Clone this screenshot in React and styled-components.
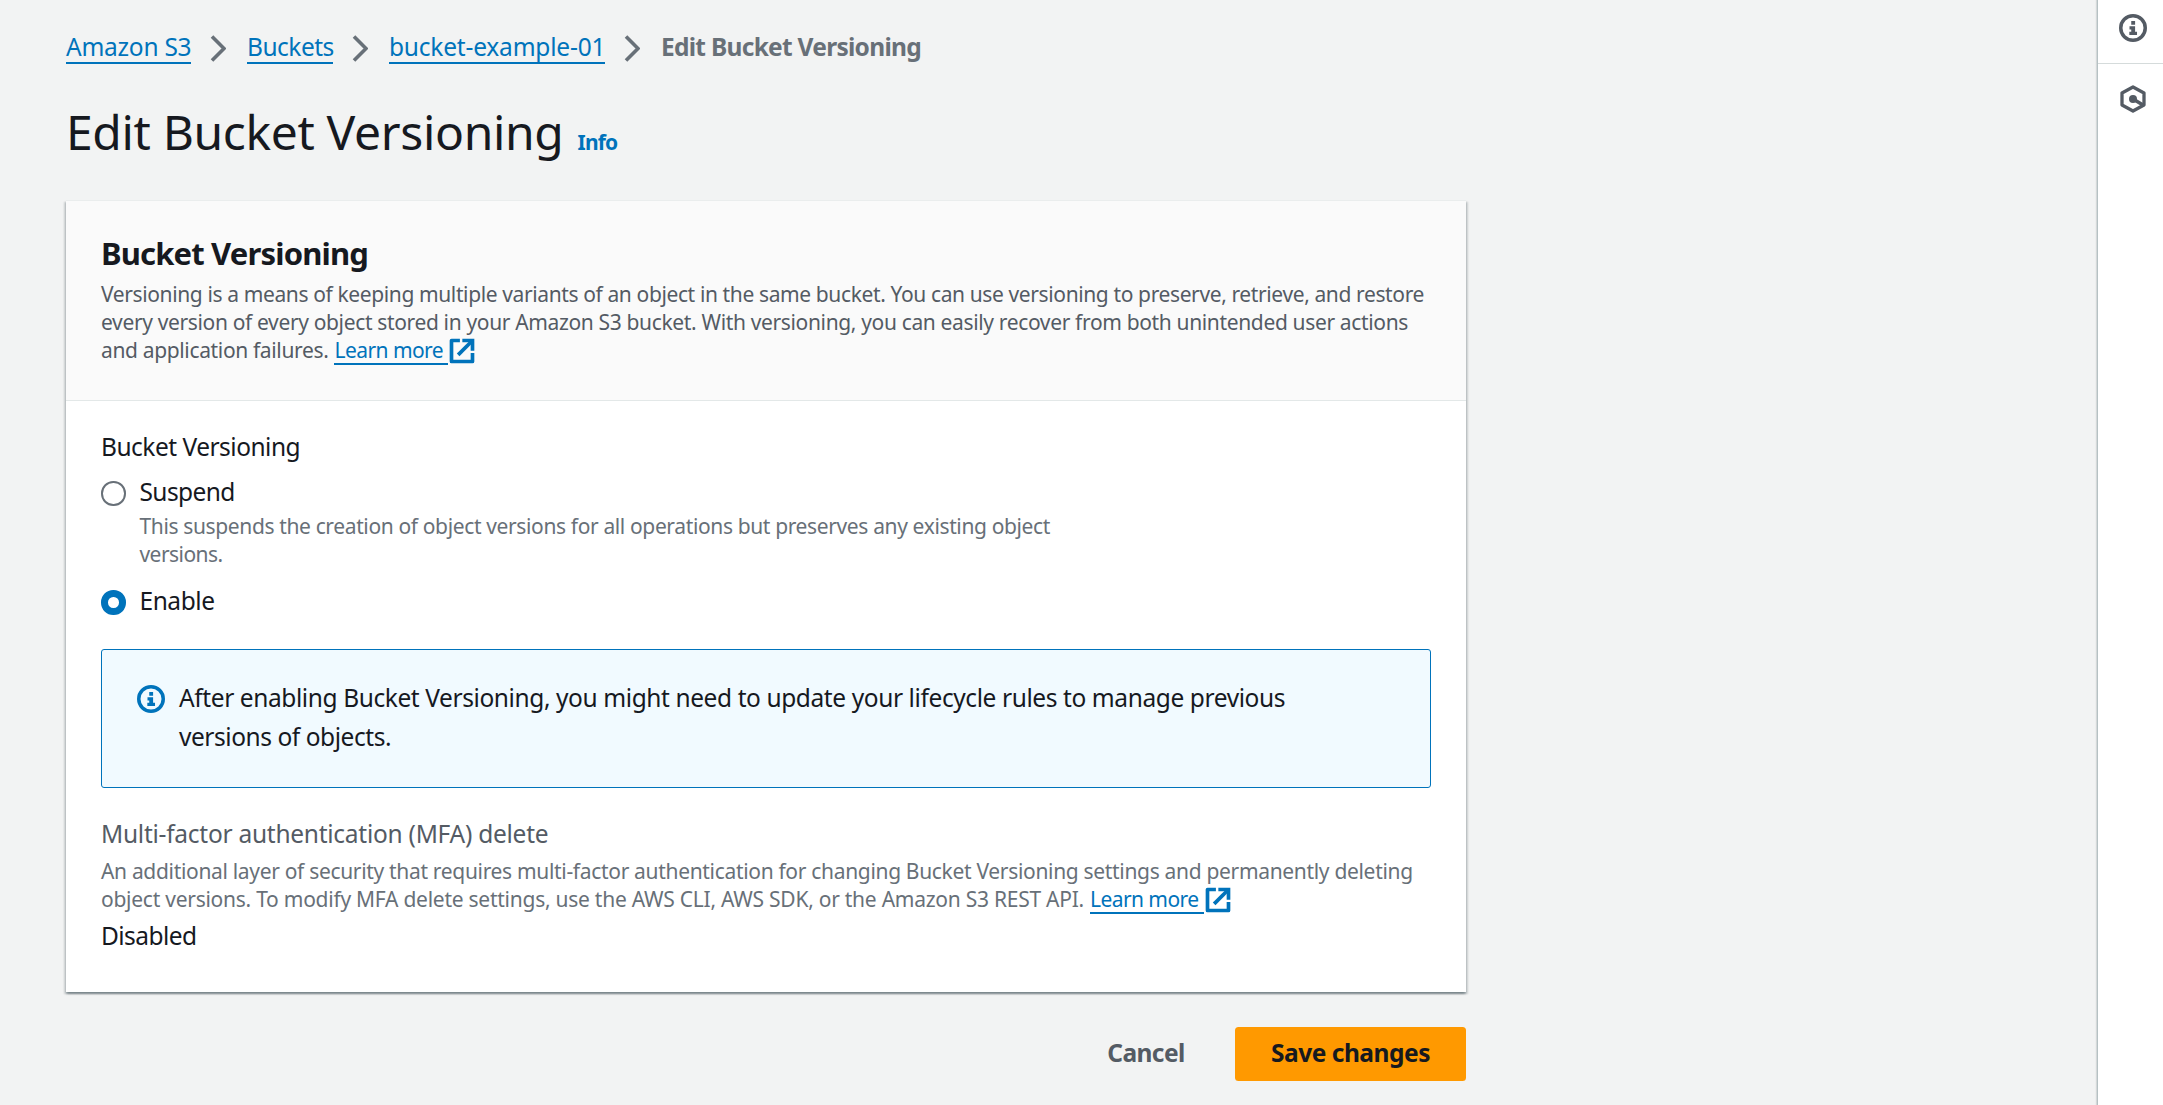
import React from "react";
import styled, { createGlobalStyle } from "styled-components";

const Global = createGlobalStyle`
  * { box-sizing: border-box; }
  body { margin: 0; background: #f2f3f3; color: #16191f; font-family: "Noto Sans", "Open Sans", sans-serif; font-size: 24.5px; line-height: 38.5px; }
  h1, h2, p { margin: 0; }
  svg { display: block; }
`;
const Shell = styled.div`display: flex; height: 1105px; overflow: hidden;`;
const Main = styled.main`flex: 1; padding: 27px 0 0 66px;`;
const Content = styled.div`width: 1400px;`;
const T = styled.span`letter-spacing: ${(p) => p.$ls || 0}px;`;

const Crumbs = styled.nav`display: flex; align-items: center; height: 40px;`;
const Link = styled.a`
  color: #0073bb;
  white-space: nowrap;
  letter-spacing: ${(p) => p.$ls || 0}px;
  border-bottom: 2px solid #0073bb;
`;
const CrumbLink = styled(Link)`height: 34px; line-height: 33px; width: ${(p) => p.$w}px;`;
const Chevron = styled.svg`width: 16px; height: 27px; margin: 2px 21px 0 19px; flex: none;`;
const Current = styled.span`color: #687078; font-weight: 700; letter-spacing: ${(p) => p.$ls || 0}px;`;

const TitleRow = styled.div`display: flex; align-items: baseline; gap: 14px; margin-top: 30px; height: 103px; white-space: nowrap;`;
const Title = styled.h1`font-size: 48px; line-height: 70px; font-weight: 400; letter-spacing: ${(p) => p.$ls || 0}px;`;
const Info = styled.a`color: #0073bb; font-size: 21px; font-weight: 700; letter-spacing: ${(p) => p.$ls || 0}px;`;

const Card = styled.section`
  height: 792px;
  background: #fff;
  box-shadow: 0 1.75px 1.75px 0 rgba(0, 28, 36, 0.3), 1.75px 1.75px 1.75px 0 rgba(0, 28, 36, 0.15), -1.75px 1.75px 1.75px 0 rgba(0, 28, 36, 0.15);
`;
const CardHead = styled.header`height: 201px; padding: 31px 35px 0; background: #fafafa; border-top: 1px solid #eaeded; border-bottom: 1px solid #e3e8e8;`;
const Heading = styled.h2`font-size: 31px; line-height: 42px; font-weight: 700; letter-spacing: ${(p) => p.$ls || 0}px;`;
const Small = styled.p`margin-top: ${(p) => p.$top || 0}px; font-size: 21px; line-height: 28px; color: ${(p) => p.$color}; white-space: nowrap;`;
const Line = styled.span`display: flex; height: 28px; letter-spacing: ${(p) => p.$ls || 0}px;`;
const SmallLink = styled(Link)`margin-left: 6px; height: 29px; width: 114px;`;
const OpenIcon = styled.svg`width: 28px; height: 28px; margin-top: 1px; flex: none;`;

const Body = styled.div`padding: 26px 35px 0;`;
const Label = styled.div`line-height: 40px; color: ${(p) => p.$color || "#16191f"}; letter-spacing: ${(p) => p.$ls || 0}px;`;
const Option = styled.div`display: grid; grid-template-columns: 24.5px 1fr; column-gap: 14px; margin-top: ${(p) => p.$top}px; white-space: nowrap;`;
const Radio = styled.span`
  width: 24.5px; height: 24.5px; margin-top: 9px; border-radius: 50%; background: #fff;
  border: ${(p) => (p.$on ? "7px solid #0073bb" : "2px solid #687078")};
`;
const Alert = styled.div`
  display: flex; height: 139px; margin-top: 28px; padding: 29px 35px 0;
  background: #f1faff; border: 1px solid #0073bb; border-radius: 3px; white-space: nowrap;
`;
const AlertIcon = styled.svg`width: 28px; height: 28px; margin: 6px 14px 0 0; flex: none;`;
const AlertText = styled.div`line-height: 38.5px;`;
const AlertLine = styled.div`letter-spacing: ${(p) => p.$ls || 0}px;`;
const Mfa = styled.div`margin-top: 26px;`;
const MfaState = styled(Label)`margin-top: 3px;`;

const Actions = styled.footer`display: flex; justify-content: flex-end; align-items: center; margin-top: 35px;`;
const Button = styled.button`
  border: 0; border-radius: 3.5px; height: 54px; padding: 0 0 2px; width: ${(p) => p.$w}px;
  font: 700 24.5px/38px "Noto Sans", "Open Sans", sans-serif;
  background: ${(p) => (p.$primary ? "#ff9900" : "transparent")};
  color: ${(p) => (p.$primary ? "#16191f" : "#545b64")};
  letter-spacing: ${(p) => p.$ls || 0}px;
`;
const Rail = styled.aside`width: 66px; background: #fff; border-left: 1px solid #b6c1c3; box-shadow: -1px 0 1px rgba(0, 28, 36, 0.12);`;
const RailItem = styled.div`
  display: flex; justify-content: center; height: ${(p) => p.$h}px; padding: ${(p) => p.$pt}px 0 0 5px;
  border-bottom: ${(p) => (p.$line ? "1px solid #d5dbdb" : "0")};
`;

const InfoGlyph = ({ color }) => (
  <g>
    <circle cx="8" cy="8" r="7" fill="none" stroke={color} strokeWidth="2" />
    <path d="M7 4h2.2v2.2H7zM6 7h3.2v3.1h1.1V12H5.9v-1.9H7V8.8H6z" fill={color} />
  </g>
);
const Sep = () => (
  <Chevron viewBox="0 0 16 27">
    <path d="M2 1.5l12 12-12 12" fill="none" stroke="#687078" strokeWidth="3.6" />
  </Chevron>
);
const External = () => (
  <OpenIcon viewBox="0 0 16 16" fill="none" stroke="#0073bb" strokeWidth="2.1">
    <path d="M8.2 2H14v5.8" />
    <path d="M5.8 10.2L14 2" />
    <path d="M14 9.2V14H2V2h4.8" strokeLinejoin="round" />
  </OpenIcon>
);

export default function App() {
  return (
    <Shell>
      <Global />
      <Main>
        <Content>
          <Crumbs>
            <CrumbLink $w={125} $ls={-0.25}>Amazon S3</CrumbLink>
            <Sep />
            <CrumbLink $w={86} $ls={-0.5}>Buckets</CrumbLink>
            <Sep />
            <CrumbLink $w={216} $ls={-0.2}>bucket-example-01</CrumbLink>
            <Sep />
            <Current $ls={-0.72}>Edit Bucket Versioning</Current>
          </Crumbs>
          <TitleRow>
            <Title $ls={-0.35}>Edit Bucket Versioning</Title>
            <Info $ls={-0.8}>Info</Info>
          </TitleRow>
          <Card>
            <CardHead>
              <Heading $ls={-0.84}>Bucket Versioning</Heading>
              <Small $color="#545b64" $top={6}>
                <Line $ls={-0.38}>Versioning is a means of keeping multiple variants of an object in the same bucket. You can use versioning to preserve, retrieve, and restore</Line>
                <Line $ls={-0.35}>every version of every object stored in your Amazon S3 bucket. With versioning, you can easily recover from both unintended user actions</Line>
                <Line>
                  <T $ls={-0.35}>and application failures.</T>
                  <SmallLink $ls={-0.55}>Learn more</SmallLink>
                  <External />
                </Line>
              </Small>
            </CardHead>
            <Body>
              <Label $ls={-0.5}>Bucket Versioning</Label>
              <Option $top={5}>
                <Radio />
                <div>
                  <Label $ls={-0.6}>Suspend</Label>
                  <Small $color="#687078">
                    <Line $ls={-0.365}>This suspends the creation of object versions for all operations but preserves any existing object</Line>
                    <Line $ls={-0.55}>versions.</Line>
                  </Small>
                </div>
              </Option>
              <Option $top={13}>
                <Radio $on />
                <Label $ls={-0.45}>Enable</Label>
              </Option>
              <Alert>
                <AlertIcon viewBox="0 0 16 16"><InfoGlyph color="#0073bb" /></AlertIcon>
                <AlertText>
                  <AlertLine $ls={-0.405}>After enabling Bucket Versioning, you might need to update your lifecycle rules to manage previous</AlertLine>
                  <AlertLine $ls={-0.45}>versions of objects.</AlertLine>
                </AlertText>
              </Alert>
              <Mfa>
                <Label $color="#545b64" $ls={-0.26}>Multi-factor authentication (MFA) delete</Label>
                <Small $color="#687078" $top={3}>
                  <Line $ls={-0.32}>An additional layer of security that requires multi-factor authentication for changing Bucket Versioning settings and permanently deleting</Line>
                  <Line>
                    <T $ls={-0.255}>object versions. To modify MFA delete settings, use the AWS CLI, AWS SDK, or the Amazon S3 REST API.</T>
                    <SmallLink $ls={-0.55}>Learn more</SmallLink>
                    <External />
                  </Line>
                </Small>
                <MfaState $ls={-0.55}>Disabled</MfaState>
              </Mfa>
            </Body>
          </Card>
          <Actions>
            <Button $w={178} $ls={-0.6}>Cancel</Button>
            <Button $primary $w={231} $ls={-0.48}>Save changes</Button>
          </Actions>
        </Content>
      </Main>
      <Rail>
        <RailItem $h={64} $pt={14} $line>
          <svg width="28" height="28" viewBox="0 0 16 16"><InfoGlyph color="#545b64" /></svg>
        </RailItem>
        <RailItem $h={70} $pt={21}>
          <svg width="28" height="28" viewBox="0 0 28 28" fill="none" stroke="#545b64" strokeWidth="3.3" strokeLinejoin="round">
            <path d="M25 20V8L14 2 3 8v12l11 6z" />
            <path d="M14 14l10 6" strokeWidth="3.6" />
            <circle cx="14" cy="14" r="4" fill="#545b64" stroke="none" />
          </svg>
        </RailItem>
      </Rail>
    </Shell>
  );
}
